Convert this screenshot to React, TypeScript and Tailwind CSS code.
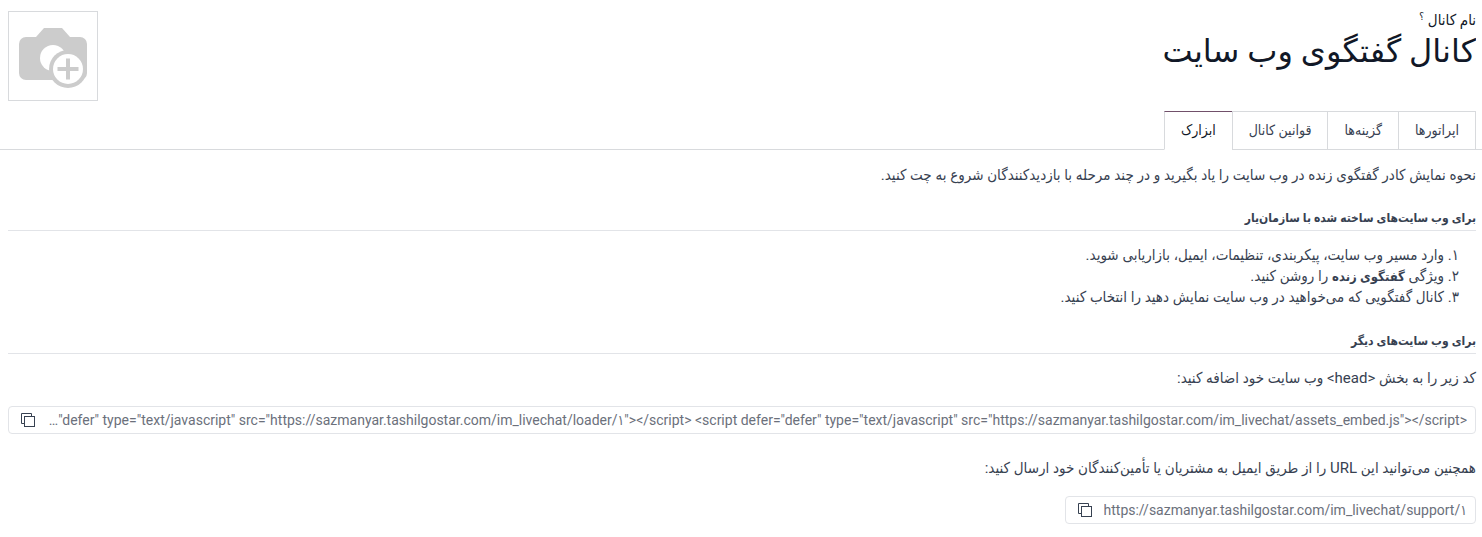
import { useState } from "react";
import clsx from "clsx";

const tabs = ["اپراتورها", "گزینه‌ها", "قوانین کانال", "ابزارک"];

const embedCode =
  '<script defer="defer" type="text/javascript" src="https://sazmanyar.tashilgostar.com/im_livechat/loader/۱"></script> <script defer="defer" type="text/javascript" src="https://sazmanyar.tashilgostar.com/im_livechat/assets_embed.js"></script>';

const supportUrl = "https://sazmanyar.tashilgostar.com/im_livechat/support/۱";

function CameraPlusIcon() {
  return (
    <svg viewBox="1 1 88 88" className="size-full" aria-hidden="true">
      <path
        d="M18 26h10l8-9h18l8 9h10a7 7 0 0 1 7 7v29a7 7 0 0 1-7 7H18a7 7 0 0 1-7-7V33a7 7 0 0 1 7-7z"
        fill="#cccccc"
      />
      <circle cx="45" cy="47" r="13" fill="#ffffff" />
      <circle cx="60" cy="58" r="19" fill="#cccccc" />
      <circle cx="60" cy="58" r="15" fill="#ffffff" />
      <path d="M60 47.500v21M49.500 58h21" stroke="#cccccc" strokeWidth="4" fill="none" />
    </svg>
  );
}

function CopyIcon() {
  return (
    <svg width="14" height="14" viewBox="0 0 14 14" fill="none" stroke="currentColor" aria-hidden="true">
      <path d="M3 10.5H0.5V0.5H10.5V3" />
      <rect x="3.5" y="3.5" width="10" height="10" />
    </svg>
  );
}

interface CopyFieldProps {
  text: string;
  label: string;
  className?: string;
}

function CopyField({ text, label, className }: CopyFieldProps) {
  return (
    <div className={clsx("flex h-7 items-center gap-3 rounded border border-[#e2e4e8] ps-2 pe-3", className)}>
      <span className="min-w-0 flex-1 truncate text-[14px] text-[#6b707b]">
        <bdo dir="ltr">{text}</bdo>
      </span>
      <button
        type="button"
        aria-label={label}
        onClick={() => navigator.clipboard?.writeText(text)}
        className="shrink-0 text-[#374151]"
      >
        <CopyIcon />
      </button>
    </div>
  );
}

function SectionTitle({ children }: { children: string }) {
  return (
    <h2 className="mb-3.5 border-b border-[#e2e4e8] text-[12px] leading-6 font-bold text-[#374151]">{children}</h2>
  );
}

export default function App() {
  const [activeTab, setActiveTab] = useState("ابزارک");
  const [channelName, setChannelName] = useState("کانال گفتگوی وب سایت");

  return (
    <div
      dir="rtl"
      lang="fa"
      className="bg-white pt-2.5 pb-3 font-[Roboto,'DejaVu_Sans_Condensed','DejaVu_Sans',sans-serif] text-[15px] leading-[21px] text-[#374151]"
    >
      {/* Channel name and picture */}
      <header className="flex items-start gap-4 ps-1.5 pe-2">
        <div className="min-w-0 flex-1 text-[#111827]">
          <label htmlFor="channel-name" className="block">
            نام کانال <sup className="text-[10px]">؟</sup>
          </label>
          <input
            id="channel-name"
            value={channelName}
            onChange={(e) => setChannelName(e.target.value)}
            className="block h-10 w-full bg-transparent font-[Roboto,'DejaVu_Sans',sans-serif] text-[32px] leading-10 outline-none"
          />
        </div>
        <button type="button" aria-label="تصویر کانال" className="mt-px size-[90px] shrink-0 border border-[#d8dadd]">
          <CameraPlusIcon />
        </button>
      </header>

      {/* Tabs */}
      <div role="tablist" className="mt-2.5 flex border-b border-[#d8dadd] ps-1.5 text-[14px]">
        {tabs.map((tab) => (
          <button
            key={tab}
            type="button"
            role="tab"
            aria-selected={tab === activeTab}
            onClick={() => setActiveTab(tab)}
            className={clsx(
              "-mb-px h-[39px] border-t border-l px-4 first:border-r",
              tab === activeTab
                ? "border-t-[#71506a] border-b border-x-[#d8dadd] border-b-white text-[#111827]"
                : "border-[#d8dadd] border-b",
            )}
          >
            {tab}
          </button>
        ))}
      </div>

      <main className="ps-1.5 pe-2 pt-[15px]">
        <p>نحوه نمایش کادر گفتگوی زنده در وب سایت را یاد بگیرید و در چند مرحله با بازدیدکنندگان شروع به چت کنید.</p>

        <section className="mt-5">
          <SectionTitle>برای وب سایت‌های ساخته شده با سازمان‌یار</SectionTitle>
          <ol className="list-[persian] ps-8">
            <li>وارد مسیر وب سایت، پیکربندی، تنظیمات، ایمیل، بازاریابی شوید.</li>
            <li>
              ویژگی <strong className="text-[13px]">گفتگوی زنده</strong> را روشن کنید.
            </li>
            <li>کانال گفتگویی که می‌خواهید در وب سایت نمایش دهید را انتخاب کنید.</li>
          </ol>
        </section>

        <section className="mt-[21px]">
          <SectionTitle>برای وب سایت‌های دیگر</SectionTitle>
          <p>کد زیر را به بخش &lt;head&gt; وب سایت خود اضافه کنید:</p>
          <CopyField text={embedCode} label="کپی کد" className="mt-[17px]" />
          <p className="mt-6">همچنین می‌توانید این URL را از طریق ایمیل به مشتریان یا تأمین‌کنندگان خود ارسال کنید:</p>
          <CopyField text={supportUrl} label="کپی نشانی" className="mt-[17px] w-fit max-w-full" />
        </section>
      </main>
    </div>
  );
}
